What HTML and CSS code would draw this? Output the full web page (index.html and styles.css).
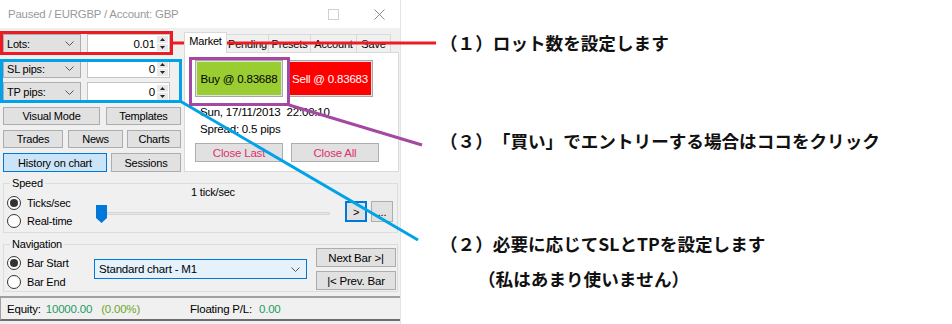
FILE: index.html
```html
<!DOCTYPE html>
<html lang="ja">

<head>
    <meta charset="UTF-8">
    <meta name="viewport" content="width=device-width, initial-scale=1.0">
    <title>Tester</title>
    <link rel="stylesheet" href="styles.css">
</head>

<body>
    <div class="window">
        <div class="titlebar">
            <span class="title">Paused / EURGBP / Account: GBP</span>
            <span class="max-btn"></span>
            <svg class="close-btn" width="11" height="11" viewBox="0 0 11 11">
                <path d="M0.5 0.5 L10.5 10.5 M10.5 0.5 L0.5 10.5" stroke="#8a8a8a" stroke-width="1" />
            </svg>
        </div>

        <div class="top">
            <div class="left">
                <div class="field-row lots">
                    <div class="combo">Lots:
                        <svg width="9" height="5" viewBox="0 0 9 5"><path d="M0.5 0.5 L4.5 4.5 L8.5 0.5" fill="none" stroke="#555" /></svg>
                    </div>
                    <div class="spin">
                        <span class="spin-value">0.01</span>
                        <div class="spin-arrows">
                            <span><svg width="5" height="3" viewBox="0 0 5 3"><path d="M0 3 L2.5 0 L5 3 Z" fill="#222" /></svg></span>
                            <span><svg width="5" height="3" viewBox="0 0 5 3"><path d="M0 0 L2.5 3 L5 0 Z" fill="#222" /></svg></span>
                        </div>
                    </div>
                </div>
                <div class="field-row sl">
                    <div class="combo">SL pips:
                        <svg width="9" height="5" viewBox="0 0 9 5"><path d="M0.5 0.5 L4.5 4.5 L8.5 0.5" fill="none" stroke="#555" /></svg>
                    </div>
                    <div class="spin">
                        <span class="spin-value">0</span>
                        <div class="spin-arrows">
                            <span><svg width="5" height="3" viewBox="0 0 5 3"><path d="M0 3 L2.5 0 L5 3 Z" fill="#222" /></svg></span>
                            <span><svg width="5" height="3" viewBox="0 0 5 3"><path d="M0 0 L2.5 3 L5 0 Z" fill="#222" /></svg></span>
                        </div>
                    </div>
                </div>
                <div class="field-row tp">
                    <div class="combo">TP pips:
                        <svg width="9" height="5" viewBox="0 0 9 5"><path d="M0.5 0.5 L4.5 4.5 L8.5 0.5" fill="none" stroke="#555" /></svg>
                    </div>
                    <div class="spin">
                        <span class="spin-value">0</span>
                        <div class="spin-arrows">
                            <span><svg width="5" height="3" viewBox="0 0 5 3"><path d="M0 3 L2.5 0 L5 3 Z" fill="#222" /></svg></span>
                            <span><svg width="5" height="3" viewBox="0 0 5 3"><path d="M0 0 L2.5 3 L5 0 Z" fill="#222" /></svg></span>
                        </div>
                    </div>
                </div>

                <div class="btn-row row1">
                    <div class="btn w-visual">Visual Mode</div>
                    <div class="btn w-templates">Templates</div>
                </div>
                <div class="btn-row row2">
                    <div class="btn w-trades">Trades</div>
                    <div class="btn w-news">News</div>
                    <div class="btn w-charts">Charts</div>
                </div>
                <div class="btn-row row3">
                    <div class="btn active w-history">History on chart</div>
                    <div class="btn w-sessions">Sessions</div>
                </div>
            </div>

            <div class="tabs">
                <div class="tab-strip">
                    <div class="tab selected t-market">Market</div>
                    <div class="tab t-pending">Pending</div>
                    <div class="tab t-presets">Presets</div>
                    <div class="tab t-account">Account</div>
                    <div class="tab t-save">Save</div>
                </div>
                <div class="tab-panel">
                    <div class="trade-row">
                        <div class="trade-btn buy">Buy @ 0.83688</div>
                        <div class="trade-btn sell">Sell @ 0.83683</div>
                    </div>
                    <div class="info">Sun, 17/11/2013&nbsp; 22:00:10</div>
                    <div class="info">Spread: 0.5 pips</div>
                    <div class="close-row">
                        <div class="btn close-btn-red">Close Last</div>
                        <div class="btn close-btn-red">Close All</div>
                    </div>
                </div>
            </div>
        </div>

        <div class="group speed">
            <span class="group-title">Speed</span>
            <div class="speed-body">
                <div class="radios">
                    <div class="radio-row"><span class="radio on"></span>Ticks/sec</div>
                    <div class="radio-row"><span class="radio"></span>Real-time</div>
                </div>
                <div class="slider">
                    <div class="tick-label">1 tick/sec</div>
                    <div class="track">
                        <svg class="thumb" width="11" height="18" viewBox="0 0 11 18">
                            <path d="M0 0 H11 V13 L5.5 18 L0 13 Z" fill="#0078d7" />
                        </svg>
                    </div>
                </div>
                <div class="speed-btns">
                    <div class="btn small focus">&gt;</div>
                    <div class="btn small">...</div>
                </div>
            </div>
        </div>

        <div class="group nav">
            <span class="group-title">Navigation</span>
            <div class="nav-body">
                <div class="radios">
                    <div class="radio-row"><span class="radio on"></span>Bar Start</div>
                    <div class="radio-row"><span class="radio"></span>Bar End</div>
                </div>
                <div class="select">Standard chart - M1
                    <svg width="9" height="5" viewBox="0 0 9 5"><path d="M0.5 0.5 L4.5 4.5 L8.5 0.5" fill="none" stroke="#555" /></svg>
                </div>
                <div class="nav-btns">
                    <div class="btn">Next Bar &gt;|</div>
                    <div class="btn">|&lt; Prev. Bar</div>
                </div>
            </div>
        </div>

        <div class="status">
            <span class="s-label">Equity:</span>
            <span class="s-num">10000.00</span>
            <span class="s-pct">(0.00%)</span>
            <span class="s-label floating">Floating P/L:</span>
            <span class="s-num">0.00</span>
        </div>
    </div>

    <div class="notes">
        <p class="note n1">（１）ロット数を設定します</p>
        <p class="note n3">（３）「買い」でエントリーする場合はココをクリック</p>
        <p class="note n2">（２）必要に応じてSLとTPを設定します</p>
        <p class="note n4">（私はあまり使いません）</p>
    </div>

    <!-- callout boxes and leader lines drawn over the window -->
    <svg class="callouts" width="952" height="324" viewBox="0 0 952 324">
        <rect x="1.5" y="32.5" width="170" height="21" fill="none" stroke="#ec1c24" stroke-width="3" />
        <line x1="172" y1="43" x2="436" y2="43" stroke="#ec1c24" stroke-width="3" />
        <rect x="1.5" y="60.5" width="179" height="41" fill="none" stroke="#00a2e8" stroke-width="3" />
        <line x1="180" y1="101" x2="418" y2="240" stroke="#00a2e8" stroke-width="3" />
        <rect x="190.5" y="58.5" width="98" height="46" fill="none" stroke="#a349a4" stroke-width="3" />
        <line x1="289" y1="105" x2="422" y2="145" stroke="#a349a4" stroke-width="3" />
    </svg>
</body>

</html>
```

FILE: styles.css
```css
* {
    box-sizing: border-box;
    margin: 0;
    padding: 0;
}

body {
    width: 952px;
    height: 324px;
    overflow: hidden;
    position: relative;
    display: flex;
    background-color: #fff;
    font-family: "Liberation Sans", Arial, sans-serif;
}

.window {
    width: 401px;
    height: 324px;
    display: flex;
    flex-direction: column;
    background-color: #f0f0f0;
    border-right: 1px solid #e4e4e4;
    font-size: 11px;
    letter-spacing: -0.2px;
    color: #000;
}

.titlebar {
    height: 28px;
    display: flex;
    align-items: center;
    padding-left: 8px;
    background-color: #fff;
}

.title {
    flex: 1;
    font-size: 11.4px;
    color: #999;
}

.max-btn {
    width: 11px;
    height: 11px;
    border: 1px solid #d0d0d0;
    margin-right: 35px;
}

.close-btn {
    margin-right: 15px;
}

/* top part: fields + buttons on the left, order tabs on the right */
.top {
    height: 147px;
    display: flex;
}

.left {
    width: 184px;
    padding: 6px 0 0 3px;
}

.field-row {
    display: flex;
    height: 19px;
}

.field-row.lots {
    margin-bottom: 6px;
}

.field-row.sl {
    margin-bottom: 4px;
}

.field-row.tp {
    height: 20px;
}

.combo {
    width: 78px;
    display: flex;
    align-items: center;
    justify-content: space-between;
    padding: 0 6px 0 3px;
    background-color: #e1e1e1;
    border: 1px solid #adadad;
}

.spin {
    width: 83px;
    margin-left: 6px;
    display: flex;
    align-items: center;
    background-color: #fff;
    border: 1px solid #c4c4c4;
    padding-right: 1px;
}

.spin-value {
    flex: 1;
    text-align: right;
    padding-right: 2px;
    font-size: 11.5px;
}

.spin-arrows {
    width: 11px;
    display: flex;
    flex-direction: column;
    gap: 1px;
}

.spin-arrows span {
    height: 7px;
    display: flex;
    align-items: center;
    justify-content: center;
    background-color: #e8e8e8;
}

.btn {
    display: flex;
    align-items: center;
    justify-content: center;
    background-color: #e1e1e1;
    border: 1px solid #adadad;
    white-space: nowrap;
}

.btn.active {
    background-color: #cce4f7;
    border-color: #0078d7;
}

.btn-row {
    display: flex;
    margin-top: 5px;
}

.row1 .btn {
    height: 18px;
}

.row2 .btn {
    height: 18px;
}

.row3 .btn {
    height: 19px;
}

.w-visual { width: 97px; margin-right: 6px; }
.w-templates { width: 75px; }
.w-trades { width: 60px; margin-right: 5px; }
.w-news { width: 55px; margin-right: 4px; }
.w-charts { width: 54px; }
.w-history { width: 104px; margin-right: 4px; }
.w-sessions { width: 70px; }

.tabs {
    width: 215px;
    padding-top: 4px;
}

.tab-strip {
    height: 20px;
    display: flex;
    align-items: flex-end;
}

.tab {
    height: 18px;
    display: flex;
    align-items: center;
    justify-content: center;
    overflow: hidden;
    white-space: nowrap;
    background-color: #f0f0f0;
    border: 1px solid #d9d9d9;
    border-bottom: none;
    margin-left: -1px;
}

.tab.selected {
    height: 21px;
    margin-left: 0;
    margin-bottom: -1px;
    position: relative;
    z-index: 1;
    background-color: #fff;
    align-items: flex-start;
    padding-top: 2px;
}

.t-market { width: 43px; }
.t-pending { width: 43px; }
.t-presets { width: 43px; }
.t-account { width: 47px; }
.t-save { width: 35px; }

.tab-panel {
    height: 120px;
    background-color: #fff;
    border: 1px solid #d9d9d9;
    padding: 7px 0 0 10px;
}

.trade-row {
    display: flex;
    gap: 4px;
    height: 37px;
}

.trade-btn {
    display: flex;
    align-items: center;
    justify-content: center;
    border: 1px solid #a8a8a8;
    box-shadow: inset 0 0 0 1px #e1e1e1;
    font-size: 11.5px;
}

.buy {
    width: 88px;
    background-color: #9acd32;
}

.sell {
    width: 86px;
    background-color: #ff0000;
    color: #fff;
}

.info {
    line-height: 17px;
    padding-left: 5px;
    font-size: 11.5px;
}

.trade-row + .info {
    margin-top: 7px;
}

.close-row {
    display: flex;
    gap: 8px;
    margin-top: 5px;
}

.close-btn-red {
    width: 88px;
    height: 19px;
    color: #e0306a;
    font-size: 11.5px;
}

/* group boxes */
.group {
    border: 1px solid #dcdcdc;
    margin: 0 2px 0 3px;
}

.group.speed {
    margin-top: 8px;
}

.group.nav {
    margin-top: 11px;
}

.group-title {
    display: block;
    width: fit-content;
    line-height: 14px;
    margin: -8px 0 -6px 6px;
    padding: 0 2px;
    background-color: #f0f0f0;
}

.speed-body {
    height: 48px;
    display: flex;
    padding-left: 3px;
}

.radios {
    width: 89px;
    padding-top: 10px;
}

.radio-row {
    height: 18px;
    display: flex;
    align-items: center;
    gap: 6px;
}

.radio {
    width: 14px;
    height: 14px;
    border: 1px solid #333;
    border-radius: 50%;
    background-color: #fff;
    display: flex;
    align-items: center;
    justify-content: center;
}

.radio.on::after {
    content: "";
    width: 8px;
    height: 8px;
    border-radius: 50%;
    background-color: #333;
}

.slider {
    width: 234px;
}

.tick-label {
    line-height: 14px;
    margin-top: 1px;
    text-align: center;
}

.track {
    position: relative;
    height: 3px;
    margin: 13px 0 0 4px;
    background-color: #e7e7e7;
    border: 1px solid #d6d6d6;
}

.thumb {
    position: absolute;
    left: -5px;
    top: -8px;
}

.speed-btns {
    display: flex;
    gap: 4px;
    margin-left: auto;
    padding: 17px 4px 0 0;
}

.btn.small {
    width: 22px;
    height: 21px;
}

.btn.focus {
    border: 2px solid #0078d7;
}

.nav-body {
    height: 46px;
    display: flex;
    padding-left: 3px;
}

.nav-body .radios {
    width: 87px;
    padding-top: 8px;
}

.nav-body .radio-row {
    height: 19px;
}

.select {
    width: 213px;
    height: 20px;
    margin-top: 14px;
    display: flex;
    align-items: center;
    justify-content: space-between;
    padding: 0 6px 0 4px;
    background-color: #e5f1fb;
    border: 1px solid #0078d7;
    font-size: 11.5px;
}

.nav-btns {
    display: flex;
    flex-direction: column;
    gap: 4px;
    margin-left: auto;
    padding: 3px 1px 0 0;
}

.nav-btns .btn {
    width: 80px;
    height: 19px;
    font-size: 11.5px;
}

.status {
    height: 25px;
    margin-top: 4px;
    display: flex;
    align-items: center;
    padding-left: 6px;
    border-top: 2px solid #a0a0a0;
    border-left: 1px solid #a0a0a0;
    border-bottom: 2px solid #6d6d6d;
    font-size: 11.5px;
}

.s-label {
    margin-right: 5px;
}

.s-num {
    color: #1f9a64;
    margin-right: 9px;
}

.s-pct {
    color: #6ea62c;
}

.floating {
    margin-left: 50px;
    margin-right: 7px;
}

/* annotations */
.notes {
    flex: 1;
    padding: 31px 0 0 39px;
    font-family: "Noto Sans CJK JP", sans-serif;
    font-weight: bold;
    font-size: 17.6px;
    line-height: 24px;
    font-kerning: none;
    text-spacing-trim: space-all;
    color: #111;
}

.n3 {
    margin-top: 74px;
}

.n2 {
    margin-top: 79px;
}

.n4 {
    margin-top: 11px;
    padding-left: 38px;
}

.callouts {
    position: absolute;
    top: 0;
    left: 0;
    pointer-events: none;
}
```
